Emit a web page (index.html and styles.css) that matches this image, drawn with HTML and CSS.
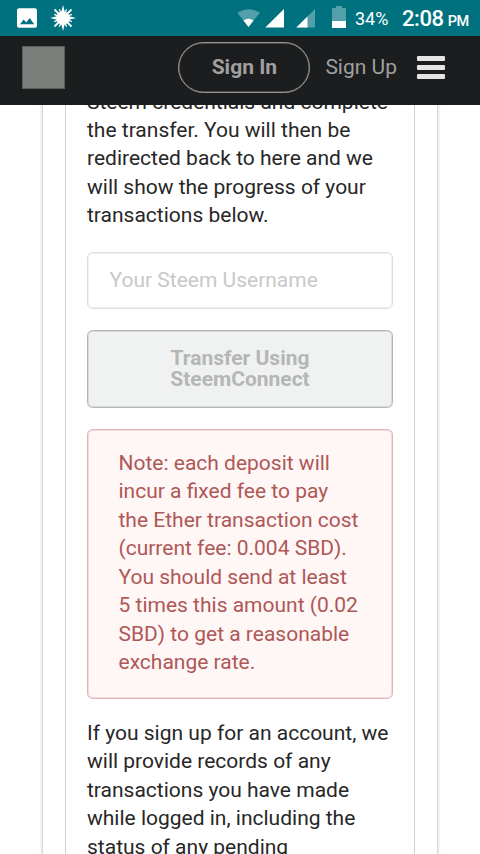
FILE: index.html
```html
<!DOCTYPE html>
<html lang="en">
<head>
<meta charset="utf-8">
<title>Deposit</title>
<link rel="stylesheet" href="styles.css">
</head>
<body>
<div class="status">
  <svg class="status-icons" width="100" height="36" viewBox="0 0 100 36">
    <path fill="#fff" fill-rule="evenodd" d="M19 8.2h16a2 2 0 0 1 2 2v15.600a2 2 0 0 1-2 2H19a2 2 0 0 1-2-2V10.200a2 2 0 0 1 2-2zM20 24.300h14.200l-4.500-6.200-3.500 4.300-2.500-2.900z"/>
    <g fill="#fff">
      <circle cx="63" cy="18" r="6.800"/>
      <path d="M61 13L63 5l2 8zM61 23l2 8 2-8zM58 16L50 18l8 2zM68 16l8 2-8 2z"/>
    </g>
    <g stroke="#fff" stroke-width="1.800">
      <path d="M54.500 9.500l17 17M71.500 9.500l-17 17"/>
      <path stroke-width="1.200" d="M59.400 9.200l7.200 17.600M66.600 9.200l-7.200 17.600M54.200 14.400l17.600 7.200M71.800 14.400l-17.600 7.200"/>
    </g>
  </svg>
  <svg class="signals" width="120" height="36" viewBox="235 0 120 36">
    <path fill="#54a0aa" d="M237.300 12.800Q248.500 5.500 259.800 12.800L248.500 27z"/>
    <path fill="#fff" d="M243.500 20.500Q248.500 17 253.500 20.500L248.500 27z"/>
    <path fill="#fff" d="M284 9v18.500h-18.700z"/>
    <path fill="#54a0aa" d="M315 9v18.500h-18.700z"/>
    <path fill="#fff" d="M307.500 16.400v11.100h-11.200z"/>
    <path fill="#54a0aa" d="M332 8h4V6h6v2h4v13h-14z"/>
    <path fill="#fff" d="M332 21h14v7h-14z"/>
  </svg>
  <span class="battery">34%</span>
  <span class="clock">2:08<small>PM</small></span>
</div>
<header class="header">
  <div class="logo"></div>
  <a class="signin">Sign In</a>
  <a class="signup">Sign Up</a>
  <div class="menu"><i></i><i></i><i></i></div>
</header>
<main class="viewport">
  <div class="outer">
    <div class="inner">
      <p class="intro">Steem credentials and complete<br>the transfer. You will then be<br>redirected back to here and we<br>will show the progress of your<br>transactions below.</p>
      <div class="field">Your Steem Username</div>
      <div class="button">Transfer Using<br>SteemConnect</div>
      <div class="note">Note: each deposit will<br>incur a fixed fee to pay<br>the Ether transaction cost<br>(current fee: 0.004 SBD).<br>You should send at least<br>5 times this amount (0.02<br>SBD) to get a reasonable<br>exchange rate.</div>
      <p>If you sign up for an account, we<br>will provide records of any<br>transactions you have made<br>while logged in, including the<br>status of any pending</p>
    </div>
  </div>
</main>
</body>
</html>
```
FILE: styles.css
```css
* { box-sizing: border-box; }
html, body { margin: 0; height: 100%; overflow: hidden; }
body {
  display: flex;
  flex-direction: column;
  background: #fff;
  color: #272727;
  font: 21px/28.44px Roboto, sans-serif;
  white-space: nowrap;
}
svg { display: block; flex: none; }
p { margin: 0; }

.status {
  flex: none;
  display: flex;
  align-items: center;
  height: 36px;
  background: #00727f;
  color: #fff;
}
.signals { margin-left: 135px; }
.battery { width: 47px; font-size: 18px; padding-top: 2px; }
.clock { font-size: 22px; font-weight: 500; padding-top: 6px; letter-spacing: -0.4px; }
.clock small { margin-left: 4px; font-size: 14.5px; letter-spacing: -0.5px; }

.header {
  flex: none;
  display: flex;
  align-items: center;
  height: 69px;
  padding: 0 35px 6px 22px;
  background: #1c1d1e;
  color: #a0a0a0;
}
.logo {
  width: 43px;
  height: 43px;
  border: 1px solid #5c5d5d;
  background: #7b7d7b;
}
.signin {
  width: 132px;
  height: 51px;
  margin-left: 113.400px;
  border: 1px solid #999;
  box-shadow: inset 0 0 0 0.500px #777;
  border-radius: 26px;
  line-height: 49px;
  text-align: center;
  font-weight: 700;
}
.signup { margin-left: 15px; }
.menu {
  width: 28px;
  margin-left: auto;
  display: grid;
  gap: 4px;
}
.menu i { height: 5px; border-radius: 1px; background: #e4e4e4; }

.viewport { flex: 1; overflow: hidden; display: flex; }
.outer {
  flex: 1;
  margin: -20px 42px;
  padding: 0 22px;
  border: solid #d9d9d9;
  border-width: 0 1px;
  box-shadow: 0 1px 3px #ccc;
}
.inner {
  height: 800px;
  padding: 2.500px 21px 0;
  border: solid #cfcfcf;
  border-width: 0 1px;
}
.intro { margin-bottom: 22.300px; }
.field, .button, .note {
  width: 306px;
  border-radius: 5.700px;
  margin-bottom: 21px;
  border: 1px solid #dedede;
  box-shadow: inset 0 0 0 1px #f2f2f2;
}
.field {
  height: 57px;
  padding-left: 21.500px;
  color: #c8c8c8;
  line-height: 54px;
}
.button {
  height: 78px;
  padding-top: 17px;
  border-color: #b3b4b4;
  box-shadow: inset 0 0 0 1px #d8dad9;
  background: #f0f2f1;
  color: #b5b6b6;
  font-weight: 700;
  line-height: 21px;
  text-align: center;
}
.note {
  height: 270px;
  margin-bottom: 19.800px;
  padding: 19px 0 0 30.500px;
  border-color: #e0b4b4;
  box-shadow: inset 0 0 0 1px #f3dada;
  background: #fff6f6;
  color: #ae5856;
}
```
